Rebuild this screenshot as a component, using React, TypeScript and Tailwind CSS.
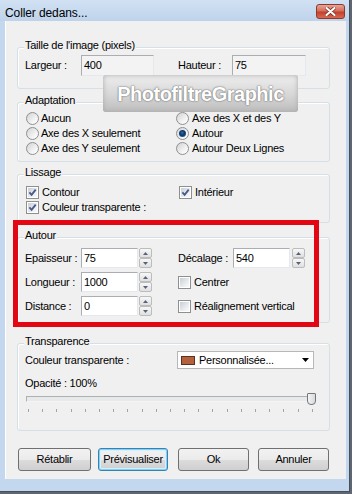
import React from "react";

const Radio = ({ checked = false }: { checked?: boolean }) => (
  <span className="flex h-[13px] w-[13px] shrink-0 items-center justify-center rounded-full border border-[#8e8f8f] bg-[linear-gradient(135deg,#d2d2d2,#f4f4f4_65%,#ffffff)]">
    {checked && (
      <span className="h-[7px] w-[7px] rounded-full bg-[radial-gradient(circle_at_45%_40%,#2b6cab_0%,#0e3464_45%,#1d5592_70%,#7dbde8_100%)]" />
    )}
  </span>
);

const Check = ({ checked = false }: { checked?: boolean }) => (
  <span className="flex h-[13px] w-[13px] shrink-0 border border-[#8e8f8f] bg-white p-[1px]">
    <span className="flex h-full w-full items-center justify-center bg-[linear-gradient(135deg,#c9ced6,#eef0f2_70%,#f8f8f8)]">
      {checked && (
        <svg width="9" height="9" viewBox="0 0 9 9">
          <path d="M1.4 4.4 L3.6 6.9 L7.7 1.6" fill="none" stroke="#46598a" strokeWidth="1.8" />
        </svg>
      )}
    </span>
  </span>
);

const Field = ({ value, className }: { value: string; className: string }) => (
  <div
    className={`flex items-center border border-[#abadb3] border-r-[#e3e9ef] border-b-[#e3e9ef] pl-[2px] ${className}`}
  >
    {value}
  </div>
);

const Spin = ({ className = "" }: { className?: string }) => (
  <div className={`flex h-[20px] w-[13px] shrink-0 flex-col ${className}`}>
    <div className="flex h-[10px] items-center justify-center rounded-[2px] border border-[#bcbcbc] bg-[linear-gradient(#f7f7f7,#e0e0e0)]">
      <svg width="5" height="3" viewBox="0 0 5 3">
        <path d="M0 3 L2.5 0 L5 3Z" fill="#56627a" />
      </svg>
    </div>
    <div className="flex h-[10px] items-center justify-center rounded-[2px] border border-[#bcbcbc] bg-[linear-gradient(#f7f7f7,#e0e0e0)]">
      <svg width="5" height="3" viewBox="0 0 5 3">
        <path d="M0 0 L2.5 3 L5 0Z" fill="#56627a" />
      </svg>
    </div>
  </div>
);

const GroupBox = ({
  label,
  className,
  children,
}: {
  label: string;
  className: string;
  children: React.ReactNode;
}) => (
  <div
    className={`ml-[11px] w-[313px] shrink-0 rounded-[3px] border border-[#d5dfe5] shadow-[inset_1px_1px_0_#ffffff] ${className}`}
  >
    <div className="-mt-[10px] ml-[6px] w-fit bg-[#f0f0f0] px-[1px] leading-[14px]">{label}</div>
    {children}
  </div>
);

const Button = ({ label, className }: { label: string; className: string }) => (
  <div
    className={`flex h-[23px] items-center justify-center rounded-[3px] border bg-[linear-gradient(#f2f2f2_0%,#ebebeb_50%,#dddddd_50%,#cfcfcf_100%)] ${className}`}
  >
    {label}
  </div>
);

export default function App() {
  const ticks = Array.from({ length: 21 }, (_, i) => i);

  return (
    <div className="h-[494px] w-[352px] overflow-hidden bg-[#5f6670] font-['Liberation_Sans',Arial,sans-serif] text-[11px] tracking-[-0.25px] text-black">
      <div className="flex h-[492px] w-[350px] flex-col border-r border-b border-[#46505c] bg-[#c3d7ee]">
        {/* title bar */}
        <div className="flex h-[21px] shrink-0 items-start justify-between bg-[linear-gradient(#d1e1f3,#bed3eb)] pl-[5px] pr-[4px]">
          <span className="pt-[6px] text-[12px] leading-[14px] tracking-[-0.1px]">Coller dedans...</span>
          <div className="mt-[4px] flex h-[15px] w-[29px] items-center justify-center rounded-[3px] border border-[#8d3a2e] bg-[linear-gradient(#e8a597,#d46e5c_45%,#c4402c_55%,#d66a52)]">
            <svg width="11" height="9" viewBox="0 0 11 9">
              <path d="M1.5 1 L9.5 8 M9.5 1 L1.5 8" stroke="#7a2a1e" strokeWidth="3.6" strokeLinecap="round" />
              <path d="M1.5 1 L9.5 8 M9.5 1 L1.5 8" stroke="#ffffff" strokeWidth="2.2" strokeLinecap="round" />
            </svg>
          </div>
        </div>

        {/* client area */}
        <div className="relative ml-[5px] flex h-[458px] w-[341px] flex-col border-l border-white bg-[#f0f0f0]">
          <GroupBox label="Taille de l'image (pixels)" className="mt-[26px] h-[42px]">
            <div className="mt-[3px] flex items-center pl-[7px]">
              <span className="w-[56px]">Largeur :</span>
              <Field value="400" className="h-[21px] w-[73px] bg-[#f3f3f3]" />
              <span className="ml-[24px] w-[54px]">Hauteur :</span>
              <Field value="75" className="h-[21px] w-[74px] bg-[#f3f3f3]" />
            </div>
          </GroupBox>

          <GroupBox label="Adaptation" className="mt-[13px] h-[60px]">
            <div className="mt-[4px] grid grid-cols-[150px_1fr] pl-[8px]">
              <div className="flex h-[15px] items-center gap-[2px]"><Radio /><span>Aucun</span></div>
              <div className="flex h-[15px] items-center gap-[3px]"><Radio /><span>Axe des X et des Y</span></div>
              <div className="flex h-[15px] items-center gap-[2px]"><Radio /><span>Axe des X seulement</span></div>
              <div className="flex h-[15px] items-center gap-[3px]"><Radio checked /><span>Autour</span></div>
              <div className="flex h-[15px] items-center gap-[2px]"><Radio /><span>Axe des Y seulement</span></div>
              <div className="flex h-[15px] items-center gap-[3px]"><Radio /><span>Autour Deux Lignes</span></div>
            </div>
          </GroupBox>

          <GroupBox label="Lissage" className="mt-[12px] h-[49px]">
            <div className="mt-[6px] grid grid-cols-[153px_1fr] pl-[8px]">
              <div className="flex h-[15px] items-center gap-[3px]"><Check checked /><span>Contour</span></div>
              <div className="flex h-[15px] items-center gap-[3px]"><Check checked /><span>Intérieur</span></div>
              <div className="flex h-[15px] items-center gap-[3px]"><Check checked /><span>Couleur transparente :</span></div>
            </div>
          </GroupBox>

          <GroupBox label="Autour" className="mt-[14px] h-[86px]">
            <div className="mt-[6px] grid grid-cols-[153px_1fr] gap-y-[4px] pl-[7px]">
              <div className="flex h-[20px] items-center">
                <span className="w-[56px]">Epaisseur :</span>
                <Field value="75" className="h-[20px] w-[57px] bg-white" />
                <Spin className="ml-[1px]" />
              </div>
              <div className="flex h-[20px] items-center">
                <span className="w-[55px]">Décalage :</span>
                <Field value="540" className="h-[20px] w-[57px] bg-white" />
                <Spin className="ml-[2px]" />
              </div>
              <div className="flex h-[20px] items-center">
                <span className="w-[56px]">Longueur :</span>
                <Field value="1000" className="h-[20px] w-[57px] bg-white" />
                <Spin className="ml-[1px]" />
              </div>
              <div className="flex h-[20px] items-center gap-[3px]"><Check /><span>Centrer</span></div>
              <div className="flex h-[20px] items-center">
                <span className="w-[56px]">Distance :</span>
                <Field value="0" className="h-[20px] w-[57px] bg-white" />
                <Spin className="ml-[1px]" />
              </div>
              <div className="flex h-[20px] items-center gap-[3px]"><Check /><span>Réalignement vertical</span></div>
            </div>
          </GroupBox>

          <GroupBox label="Transparence" className="mt-[20px] h-[88px]">
            <div className="mt-[3px] flex h-[18px] items-center pl-[7px]">
              <span className="w-[152px]">Couleur transparente :</span>
              <div className="flex h-[18px] w-[137px] items-center border border-[#b7b7b7] bg-white pl-[3px]">
                <span className="h-[9px] w-[14px] border border-[#5a3322] bg-[#b4623e]" />
                <span className="ml-[4px] flex-1">Personnalisée...</span>
                <svg width="7" height="4" viewBox="0 0 7 4" className="mr-[4px]">
                  <path d="M0 0 L7 0 L3.5 4Z" fill="#000000" />
                </svg>
              </div>
            </div>
            <div className="mt-[7px] pl-[7px] leading-[14px]">Opacité : 100%</div>
            <div className="relative ml-[8px] mt-[2px] flex h-[13px] w-[290px] items-center">
              <div className="h-[6px] w-[286px] border border-[#b0b0b0] border-r-[#e6e6e6] border-b-[#f4f4f4] bg-[#e7eaea]" />
              <div className="absolute right-0 top-[1px] h-[12px] w-[9px] rounded-t-[1px] rounded-b-[4px] border border-[#6f7780] bg-[linear-gradient(90deg,#f4f4f4,#dadada)]" />
            </div>
            <div className="ml-[10px] mt-[4px] flex h-[3px] w-[285px] justify-between">
              {ticks.map((t) => (
                <span key={t} className="h-[3px] w-px bg-[#a4a4a4]" />
              ))}
            </div>
          </GroupBox>

          <div className="mt-[17px] flex pl-[12px]">
            <Button label="Rétablir" className="w-[73px] border-[#707070]" />
            <Button
              label="Prévisualiser"
              className="ml-[7px] w-[70px] border-[#3c7fb1] shadow-[inset_0_0_0_1px_#7fd3f7,inset_0_0_0_2px_#d2f0fd]"
            />
            <Button label="Ok" className="ml-[10px] w-[71px] border-[#707070]" />
            <Button label="Annuler" className="ml-[9px] w-[71px] border-[#707070]" />
          </div>

          {/* watermark overlay */}
          <div className="absolute left-[97px] top-[54px] flex h-[37px] w-[195px] items-center justify-center rounded-[3px] bg-[linear-gradient(#eeeeee,#d6d6d6_55%,#bdbdbd)] shadow-[inset_0_0_5px_#a8a8a8]">
            <span className="text-[20px] font-bold tracking-[-0.5px] text-white [text-shadow:0_0_2px_#6e6e6e,0_0_1px_#6e6e6e]">
              PhotofiltreGraphic
            </span>
          </div>

          {/* red highlight frame */}
          <div className="absolute left-[7px] top-[199px] h-[107px] w-[306px] border-[5px] border-[#e30613]" />
        </div>
      </div>
    </div>
  );
}
